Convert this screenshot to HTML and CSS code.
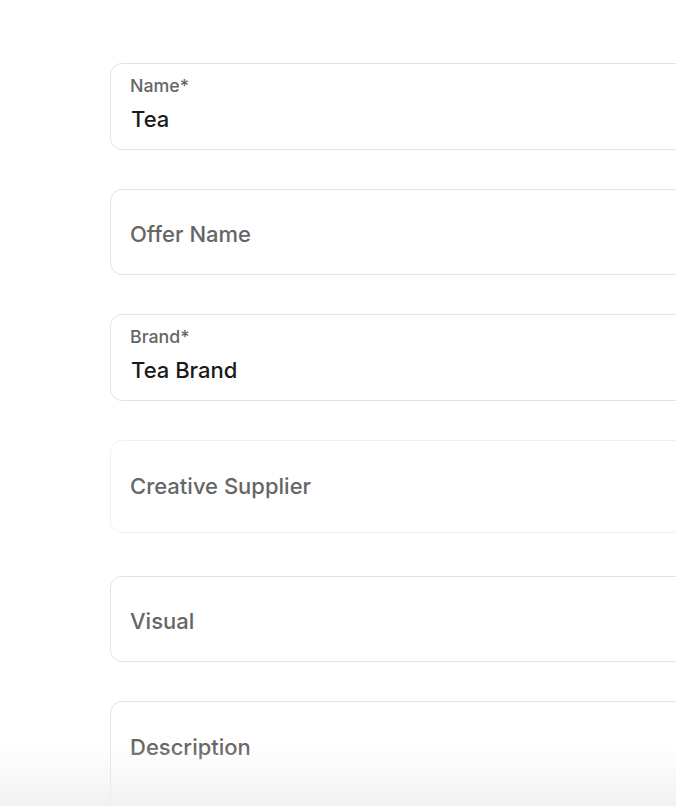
FILE: index.html
```html
<!DOCTYPE html>
<html lang="en">
<head>
<meta charset="utf-8">
<title>Form</title>
<link rel="stylesheet" href="styles.css">
</head>
<body>
<main class="form">
  <div class="field filled">
    <span class="label">Name*</span>
    <span class="value">Tea</span>
  </div>
  <div class="field empty">
    <span class="placeholder">Offer Name</span>
  </div>
  <div class="field filled">
    <span class="label">Brand*</span>
    <span class="value">Tea Brand</span>
  </div>
  <div class="field select">
    <span class="placeholder">Creative Supplier</span>
  </div>
  <div class="field empty visual">
    <span class="placeholder">Visual</span>
  </div>
  <div class="field textarea">
    <span class="placeholder">Description</span>
  </div>
</main>
<div class="fade"></div>
</body>
</html>
```

FILE: styles.css
```css
html, body {
  margin: 0;
  padding: 0;
  background: #ffffff;
  overflow: hidden;
}
body {
  font-family: Inter, "Noto Sans", sans-serif;
  height: 806px;
}
.form {
  display: flex;
  flex-direction: column;
  gap: 39px;
  padding: 63px 0 0 110px;
  width: 640px;
  height: 743px;
  overflow: hidden;
}
.field {
  box-sizing: border-box;
  height: 86.5px;
  flex-shrink: 0;
  border: 1px solid #e3e3e3;
  border-radius: 12px;
  padding: 0 19px;
  display: flex;
  flex-direction: column;
  justify-content: center;
}
.field.empty {
  padding-top: 4px;
}
.field.filled {
  justify-content: flex-start;
  padding-top: 11px;
}
.label {
  font-size: 17.8px;
  line-height: 22px;
  color: #666666;
  font-weight: 500;
}
.value {
  font-size: 22px;
  line-height: 28px;
  margin-top: 8px;
  color: #1a1a1a;
  font-weight: 500;
  padding-left: 1px;
}
.placeholder {
  font-size: 22px;
  line-height: 28px;
  color: #666666;
  font-weight: 500;
}
.field.select {
  height: 93px;
  border-color: #f0f0f0;
  margin-bottom: 4px;
}
.field.textarea {
  height: 200px;
  justify-content: flex-start;
  padding-top: 31px;
}
.fade {
  position: fixed;
  left: 0;
  right: 0;
  bottom: 0;
  height: 60px;
  background: linear-gradient(to bottom, rgba(240,240,240,0), rgba(240,240,240,0.9));
  pointer-events: none;
}
```
